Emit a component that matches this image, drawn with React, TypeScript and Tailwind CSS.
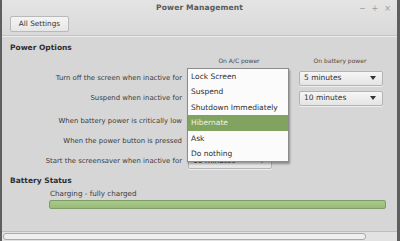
import React from "react";

const font = { fontFamily: '"DejaVu Sans", "Liberation Sans", sans-serif' };

function Combo({ text }: { text: string }) {
  return (
    <div className="flex h-[15px] w-[84px] items-center justify-between rounded-[2px] border border-[#b4b4b4] bg-gradient-to-b from-[#f6f6f6] to-[#e4e4e4] pl-[4px] pr-[6px] text-[7.5px] text-[#333] shadow-[0_1px_0_#eeeeee]">
      <span>{text}</span>
      <svg width="6" height="4" viewBox="0 0 6 4"><path d="M0 0H6L3 4Z" fill="#333" /></svg>
    </div>
  );
}

export default function App() {
  const rows = [
    { label: "Turn off the screen when inactive for", batt: "5 minutes", ac: "", mt: "mt-[0px]" },
    { label: "Suspend when inactive for", batt: "10 minutes", ac: "", mt: "mt-[4px]" },
    { label: "When battery power is critically low", batt: "", ac: "", mt: "mt-[7px]" },
    { label: "When the power button is pressed", batt: "", ac: "", mt: "mt-[4px]" },
    { label: "Start the screensaver when inactive for", batt: "", ac: "10 minutes", mt: "mt-[4px]" },
  ];
  const items = ["Lock Screen", "Suspend", "Shutdown Immediately", "Hibernate", "Ask", "Do nothing"];
  return (
    <div style={font} className="relative flex h-[241px] w-[400px] flex-col overflow-hidden border-l-2 border-r-[3px] border-[#5e5e5e] bg-[#d6d6d6] text-[#3a3a3a]">
      {/* header */}
      <div className="flex h-[36px] shrink-0 flex-col border-b border-[#c4c4c4] bg-gradient-to-b from-[#e4e4e4] to-[#d9d9d9]">
        <div className="relative flex h-[16px] items-center justify-center">
          <span className="text-[7.6px] font-bold tracking-[0.1px] text-[#5a5a5a]">Power Management</span>
          <div className="absolute right-[6px] top-[3px] flex items-center gap-[6px] text-[8px] text-[#9a9a9a]">
            <span>−</span>
            <span>+</span>
            <span>×</span>
          </div>
        </div>
        <div className="flex pl-[8px]">
          <div className="flex h-[16px] w-[59px] items-center justify-center rounded-[2px] border border-[#b9b9b9] bg-gradient-to-b from-[#f4f4f4] to-[#e6e6e6] text-[7.3px] text-[#333]">
            All Settings
          </div>
        </div>
      </div>
      <div className="h-px bg-[#ececec]" />

      {/* body */}
      <div className="relative flex flex-1 flex-col">
        <div className="pl-[8px] pt-[6px] text-[7.5px] font-bold leading-[10px] text-[#2e2e2e]">Power Options</div>
        <div className="flex pt-[3px] text-[6px] leading-[9px] text-[#4a4a4a]">
          <div className="w-[186px]" />
          <div className="w-[102px] text-center">On A/C power</div>
          <div className="w-[8px]" />
          <div className="w-[84px] text-center">On battery power</div>
        </div>
        <div className="flex flex-col pt-[5px]">
          {rows.map((r) => (
            <div key={r.label} className={`flex h-[16px] items-center ${r.mt}`}>
              <div className="w-[180px] text-right text-[6.9px] text-[#3a3a3a]">{r.label}</div>
              <div className="w-[6px]" />
              <div className="w-[102px]">
                <Combo text={r.ac} />
              </div>
              <div className="w-[9px]" />
              {r.batt ? <Combo text={r.batt} /> : null}
            </div>
          ))}
        </div>

        <div className="pl-[8px] pt-[7px] text-[7.5px] font-bold leading-[10px] text-[#2e2e2e]">Battery Status</div>
        <div className="pl-[48px] pt-[3px] text-[7.2px] leading-[10px] text-[#3a3a3a]">Charging - fully charged</div>
        <div className="ml-[47px] mt-[1px] h-[9px] w-[337px] rounded-[2px] border border-[#7f9c67] bg-gradient-to-b from-[#a9c98c] to-[#98bb78]" />

        {/* popup menu */}
        <div className="absolute left-[185px] top-[31px] w-[102px] border border-[#8c8c8c] bg-[#fbfbfb] shadow-[1px_2px_2px_rgba(0,0,0,0.35)]">
          {items.map((it) => (
            <div
              key={it}
              className={`flex h-[15.4px] items-center pl-[3px] text-[7.5px] ${
                it === "Hibernate" ? "bg-[#80a35f] text-[#eef4e6]" : "text-[#2e2e2e]"
              }`}
            >
              {it}
            </div>
          ))}
        </div>
      </div>

      {/* bottom trough */}
      <div className="flex h-[10px] shrink-0 items-center border-t border-[#bdbdbd] bg-[#e2e2e2]">
        <div className="ml-[1px] h-[7px] w-[363px] rounded-[3px] border border-[#a9a9a9] bg-[#efefef]" />
      </div>
    </div>
  );
}
